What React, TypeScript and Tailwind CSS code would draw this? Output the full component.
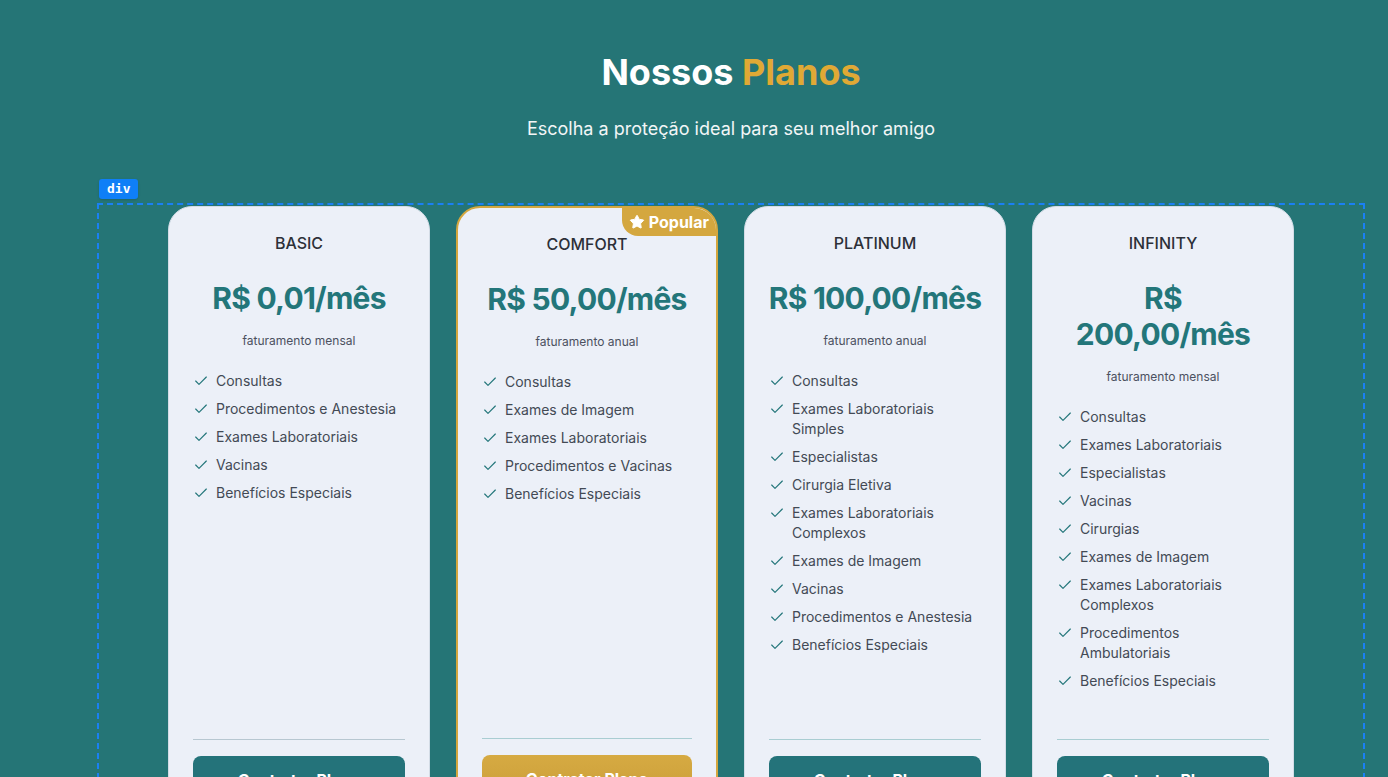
import { Check, Star } from 'lucide-react'

type Plan = {
  name: string
  price: string
  billing: string
  features: string[]
  popular?: boolean
  nowrap?: boolean
}

const plans: Plan[] = [
  {
    name: 'BASIC',
    price: 'R$ 0,01/mês',
    billing: 'faturamento mensal',
    features: ['Consultas', 'Procedimentos e Anestesia', 'Exames Laboratoriais', 'Vacinas', 'Benefícios Especiais'],
  },
  {
    name: 'COMFORT',
    price: 'R$ 50,00/mês',
    billing: 'faturamento anual',
    popular: true,
    features: ['Consultas', 'Exames de Imagem', 'Exames Laboratoriais', 'Procedimentos e Vacinas', 'Benefícios Especiais'],
  },
  {
    name: 'PLATINUM',
    price: 'R$ 100,00/mês',
    billing: 'faturamento anual',
    nowrap: true,
    features: [
      'Consultas',
      'Exames Laboratoriais Simples',
      'Especialistas',
      'Cirurgia Eletiva',
      'Exames Laboratoriais Complexos',
      'Exames de Imagem',
      'Vacinas',
      'Procedimentos e Anestesia',
      'Benefícios Especiais',
    ],
  },
  {
    name: 'INFINITY',
    price: 'R$ 200,00/mês',
    billing: 'faturamento mensal',
    features: [
      'Consultas',
      'Exames Laboratoriais',
      'Especialistas',
      'Vacinas',
      'Cirurgias',
      'Exames de Imagem',
      'Exames Laboratoriais Complexos',
      'Procedimentos Ambulatoriais',
      'Benefícios Especiais',
    ],
  },
]

function PlanCard({ plan }: { plan: Plan }) {
  return (
    <div
      className={`relative flex flex-col overflow-hidden rounded-3xl bg-[#ecf0f8] p-6 ${
        plan.popular ? 'border-2 border-[#d4a73f]' : 'border border-[#d3dce6]'
      }`}
    >
      {plan.popular && (
        <div className="absolute top-0 right-0 flex items-center gap-1 rounded-bl-2xl bg-[#d4a73f] pl-[7px] pr-[7px] py-[2px] text-base font-bold text-white">
          <Star size={16} fill="currentColor" strokeWidth={1.5} />
          Popular
        </div>
      )}
      <h3 className="text-center text-base font-medium text-[#2d3038]">{plan.name}</h3>
      <div
        className={`-mx-1 mt-[25px] text-center text-3xl font-bold leading-[36px] tracking-tight text-[#23767a] ${
          plan.nowrap ? 'whitespace-nowrap' : 'px-1'
        }`}
      >
        {plan.price}
      </div>
      <p className="mt-[17px] text-center text-xs text-[#4b5160]">{plan.billing}</p>
      <ul className="mt-[22px] flex flex-1 flex-col gap-2">
        {plan.features.map((f) => (
          <li key={f} className="flex items-start gap-[7px] text-sm leading-5 text-[#434a55]">
            <Check size={16} strokeWidth={1.75} className="mt-0.5 shrink-0 text-[#23767a]" />
            <span>{f}</span>
          </li>
        ))}
      </ul>
      <div className={`mt-12 border-t ${plan.name === 'BASIC' ? 'border-[#b7c7d1]' : 'border-[#a9cdd2]'} pt-4`}>
        <button
          className={`w-full rounded-lg py-3 text-base font-bold text-white ${
            plan.popular ? 'bg-gradient-to-b from-[#d6aa42] to-[#c99d39]' : 'bg-[#24737a]'
          }`}
        >
          Contratar Plano
        </button>
      </div>
    </div>
  )
}

export default function App() {
  return (
    <section className="min-h-screen bg-[#257576] pl-[74px] pt-[52px] pb-16 font-['Inter',sans-serif]">
      <div className="px-6">
        <div className="text-center">
          <h2 className="text-4xl font-bold text-white">
            Nossos <span className="text-[#e0a935]">Planos</span>
          </h2>
          <p className="mt-[23px] text-lg text-[#f2f6f7]">Escolha a proteção ideal para seu melhor amigo</p>
        </div>

        <div className="relative mt-[63px]">
          {/* devtools highlight */}
          <div className="pointer-events-none absolute -top-[3px] left-[-1px] right-[-1px] bottom-0 z-10 border-2 border-dashed border-[#1a80f5]" />
          <div className="absolute -top-[27px] left-[1px] z-10 rounded-[3px] bg-[#0f7ff7] px-2 py-[1px] font-['DejaVu_Sans_Mono',monospace] text-[13px] font-bold leading-[18px] text-white shadow">
            div
          </div>

          <div className="mx-auto grid max-w-[1126px] grid-cols-4 gap-[26px]">
            {plans.map((p) => (
              <PlanCard key={p.name} plan={p} />
            ))}
          </div>
        </div>
      </div>
    </section>
  )
}
